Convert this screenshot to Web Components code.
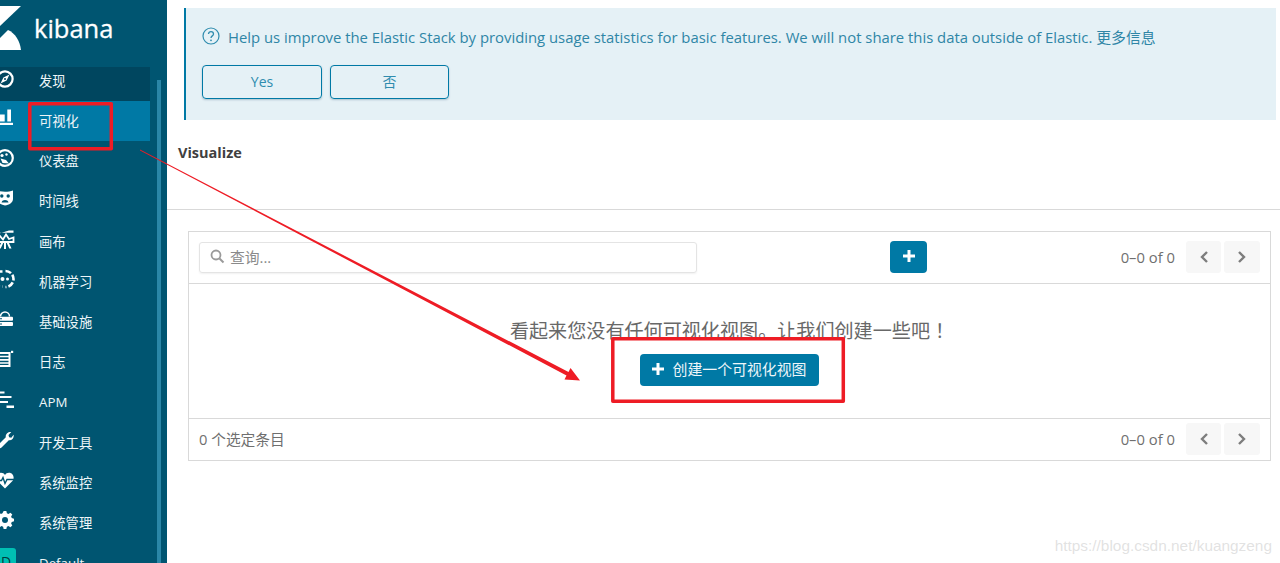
<!DOCTYPE html>
<html lang="zh">
<head>
<meta charset="utf-8">
<title>Kibana</title>
<style>
  html, body {
    margin: 0;
    height: 563px;
    overflow: hidden;
    background: #fff;
    font-family: "Open Sans", "Noto Sans CJK SC", sans-serif;
  }
</style>
</head>
<body>
<kb-app>
  <kb-sidebar slot="side">
    <kb-nav-item icon="compass" state="hover">发现</kb-nav-item>
    <kb-nav-item icon="bars" state="active">可视化</kb-nav-item>
    <kb-nav-item icon="gauge">仪表盘</kb-nav-item>
    <kb-nav-item icon="mask">时间线</kb-nav-item>
    <kb-nav-item icon="easel">画布</kb-nav-item>
    <kb-nav-item icon="ml">机器学习</kb-nav-item>
    <kb-nav-item icon="infra">基础设施</kb-nav-item>
    <kb-nav-item icon="logs">日志</kb-nav-item>
    <kb-nav-item icon="apm">APM</kb-nav-item>
    <kb-nav-item icon="wrench">开发工具</kb-nav-item>
    <kb-nav-item icon="heart">系统监控</kb-nav-item>
    <kb-nav-item icon="gear">系统管理</kb-nav-item>
    <kb-nav-item icon="space">Default</kb-nav-item>
  </kb-sidebar>
  <kb-banner>Help us improve the Elastic Stack by providing usage statistics for basic features. We will not share this data outside of Elastic. 更多信息</kb-banner>
  <kb-page-title>Visualize</kb-page-title>
  <kb-table>
    <span slot="message">看起来您没有任何可视化视图。让我们创建一些吧<span style="padding-left: 5px; margin-right: -5px">！</span></span>
    <span slot="action">创建一个可视化视图</span>
    <span slot="selected">0 个选定条目</span>
  </kb-table>
</kb-app>
<kb-annotations></kb-annotations>

<script>
const ICONS = {
  compass: `<circle cx="9" cy="9" r="7.600" fill="none" stroke="#fff" stroke-width="2.200"/><path d="M13.500 4.500 10.600 10.600 4.500 13.500 7.400 7.400z" fill="#fff"/><circle cx="9" cy="9" r="1" fill="#00465f"/>`,
  bars: `<path d="M0 13.800h17v2.200H0z" fill="#fff"/><path d="M3.500 5.500h5.200v7h-5.200zM11.300 .5h3.700v12h-3.700z" fill="#fff"/>`,
  gauge: `<circle cx="9" cy="9" r="7.800" fill="none" stroke="#fff" stroke-width="2.200"/><circle cx="6" cy="6.500" r="1.600" fill="#fff"/><circle cx="10.500" cy="5.500" r="1.200" fill="#fff"/><path d="M4.500 9.500l5.500 1.500 3 3.500-6.500-.5z" fill="#fff"/>`,
  mask: `<path d="M1 1.500C5.500 3.200 12.500 3.200 17 1.500v8.500c0 3.800-4 6-8 6.500-4-.5-8-2.700-8-6.500z" fill="#fff"/><circle cx="5.800" cy="7" r="1.700" fill="#005571"/><circle cx="12.200" cy="7" r="1.700" fill="#005571"/><path d="M5.500 13.500c1-3.200 6-3.200 7 0z" fill="#005571"/>`,
  easel: `<path d="M1 4 13 .5h4.500v2.300H3z" fill="#fff"/><path d="M0 10.500l4-4.500 3 3.500 3-5 3 4.500 4.500-1.500V12H0z" fill="none" stroke="#fff" stroke-width="1.800"/><path d="M8 12h2v7H8zM2.500 18.500l3-6.500h2.200l-3 6.500zM15.500 18.500l-3-6.500h-2.200l3 6.500z" fill="#fff"/>`,
  ml: `<path d="M9.500 1a8 8 0 0 1 0 16" fill="none" stroke="#fff" stroke-width="2.600" stroke-dasharray="6 2"/><path d="M6.500 1.500H3L.5 9 3 16.500h3.500" fill="none" stroke="#fff" stroke-width="2.600" stroke-dasharray="5 2.500"/><circle cx="6.500" cy="9" r="2" fill="#fff"/><circle cx="11.500" cy="9" r="1.500" fill="#fff"/>`,
  infra: `<path d="M4.500 6.500a4.500 4.500 0 0 1 9 0" fill="none" stroke="#fff" stroke-width="1.500"/><rect x="1" y="6.800" width="16" height="4" rx="1" fill="#fff"/><rect x="1" y="12" width="16" height="4" rx="1" fill="#fff"/><path d="M3.500 8.300h2.500v1H3.500zM3.500 13.500h2.500v1H3.500z" fill="#005571"/>`,
  logs: `<path d="M0 3h13.500v13H0z" fill="none" stroke="#fff" stroke-width="2"/><path d="M0 6.500h13.500M0 9.800h13.500M0 13h13.500" stroke="#fff" stroke-width="1.700"/><path d="M15 .8h2.200V3H15z" fill="#fff"/>`,
  apm: `<path d="M0 1.500h8.500v2H0zM0 6h15.500v2H0zM3 11h9v2H3zM10.500 15.500h7.500v2.500h-7.500z" fill="#fff"/>`,
  wrench: `<path d="M17.600 3.800c.7 3-1.700 6-4.800 5.500L5.500 16.600c-2 1.700-4.800-1-3-3l7.300-7.300C9.200 3.300 12.200.5 15.300 1.100L12.500 4l.6 2.200 2.200.6z" fill="#fff"/>`,
  heart: `<path d="M9 17.500 1.800 10.300C-1.200 7 .8 1.800 5 1.800c1.800 0 3.100.9 4 2.200.9-1.300 2.200-2.200 4-2.200 4.200 0 6.200 5.200 3.200 8.500z" fill="#fff"/><path d="M0 9.500h5.500l1.500-3 2 6 2-4h7" fill="none" stroke="#005571" stroke-width="1.400"/>`,
  gear: `<path d="M7.500 0h3l.6 2.500 1.700.7 2.200-1.300 2.100 2.100-1.300 2.200.7 1.700 2.500.6v3l-2.500.6-.7 1.700 1.300 2.200-2.100 2.100-2.200-1.300-1.700.7-.6 2.500h-3l-.6-2.500-1.700-.7-2.200 1.300L.2 16.300l1.300-2.200-.7-1.700-2.500-.6v-3l2.500-.6.7-1.700L.2 4l2.100-2.100 2.200 1.300 1.700-.7z" transform="translate(.9 0) scale(.9)" fill="#fff"/><circle cx="9" cy="9" r="3" fill="#005571"/>`
}

// one entry of the left menu, text comes through the slot
class KbNavItem extends HTMLElement {
  constructor () {
    super()
    this.shadow = this.attachShadow({ mode: 'open' })
  }

  connectedCallback () {
    const name = this.getAttribute('icon')
    const icon = name === 'space'
      ? `<span class="space">D</span>`
      : `<svg viewBox="0 0 18 18" width="18" height="18">${ICONS[name]}</svg>`
    this.shadow.innerHTML = /*html*/`
      <style>
        :host {
          display: flex;
          align-items: center;
          box-sizing: border-box;
          height: 40.2px;
          padding-bottom: 1px;
          color: #eef5f8;
          font-size: 13.3px;
        }
        :host([state="hover"]) { background: #00465f; height: 34px; padding-bottom: 8px; }
        :host([state="active"]) { background: #0079a5; }
        .icon {
          flex: none;
          width: 18px;
          height: 18px;
          margin-left: -4px;
          margin-right: 25px;
          margin-bottom: 5px;
        }
        :host([state="hover"]) .icon { margin-bottom: 3px; }
        .space {
          display: block;
          box-sizing: border-box;
          width: 20px;
          height: 20px;
          margin-top: -3px;
          padding-left: 5px;
          border-radius: 3px;
          background: #00bfb3;
          color: #00393a;
          font-size: 14px;
          line-height: 28px;
          overflow: hidden;
        }
        svg { display: block; overflow: visible; }
      </style>
      <span class="icon">${icon}</span>
      <slot></slot>
    `
  }
}

class KbSidebar extends HTMLElement {
  constructor () {
    super()
    this.shadow = this.attachShadow({ mode: 'open' })
  }

  connectedCallback () {
    this.shadow.innerHTML = /*html*/`
      <style>
        :host {
          display: block;
          width: 167px;
          height: 563px;
          background: #005571;
          overflow: hidden;
        }
        .logo {
          display: flex;
          align-items: center;
          height: 67px;
          box-sizing: border-box;
          padding-bottom: 12px;
          color: #fff;
          font: 400 25.500px/1 "Open Sans", sans-serif;
        }
        .logo svg { flex: none; margin-right: 13px; }
        .logo span { padding-top: 2px; -webkit-text-stroke: .3px #fff; }
        .body { display: flex; align-items: flex-start; }
        nav { width: 150px; flex: none; }
        .thumb {
          width: 4px;
          height: 500px;
          margin: 13px 0 0 7px;
          background: #2a86a7;
        }
      </style>
      <div class="logo">
        <svg width="21" height="46" viewBox="0 0 21 46">
          <path d="M0 1h21L0 21z" fill="#fff"/>
          <path d="M0 33l8-8c7 3 12 11 13 20H0z" fill="#fff"/>
        </svg>
        <span>kibana</span>
      </div>
      <div class="body">
        <nav><slot></slot></nav>
        <div class="thumb"></div>
      </div>
    `
  }
}

class KbButton extends HTMLElement {
  constructor () {
    super()
    this.shadow = this.attachShadow({ mode: 'open' })
  }

  connectedCallback () {
    this.shadow.innerHTML = /*html*/`
      <style>
        :host {
          display: inline-flex;
          align-items: center;
          justify-content: center;
          box-sizing: border-box;
          height: 34px;
          width: 120px;
          padding-bottom: 2px;
          border: 1px solid #0079a5;
          border-radius: 4px;
          color: #2f8cae;
          font-size: 14px;
          box-shadow: 0 1px 2px rgba(0, 60, 90, .25);
        }
      </style>
      <slot></slot>
    `
  }
}

class KbBanner extends HTMLElement {
  constructor () {
    super()
    this.shadow = this.attachShadow({ mode: 'open' })
  }

  connectedCallback () {
    this.shadow.innerHTML = /*html*/`
      <style>
        :host {
          display: block;
          box-sizing: border-box;
          height: 112px;
          margin: 8px 4px 0 17px;
          padding: 17px 0 0 16px;
          background: #e5f1f6;
          border-left: 2px solid #0079a5;
          color: #2f86a6;
          font-size: 14.850px;
        }
        .line { display: flex; align-items: center; height: 22px; white-space: nowrap; }
        svg { margin-right: 8px; flex: none; }
        .actions { display: flex; gap: 8px; margin-top: 18px; }
        kb-button + kb-button { width: 119px; }
      </style>
      <div class="line">
        <svg width="18" height="18" viewBox="0 0 18 18">
          <circle cx="9" cy="9" r="8" fill="none" stroke="#2f8cae" stroke-width="1.200"/>
          <path d="M6.500 7c0-3.300 5-3.300 5 0 0 2-2.500 1.800-2.500 4" fill="none" stroke="#2f8cae" stroke-width="1.300"/>
          <circle cx="9" cy="13.300" r=".9" fill="#2f8cae"/>
        </svg>
        <span><slot></slot></span>
      </div>
      <div class="actions">
        <kb-button>Yes</kb-button>
        <kb-button>否</kb-button>
      </div>
    `
  }
}

class KbPageTitle extends HTMLElement {
  constructor () {
    super()
    this.shadow = this.attachShadow({ mode: 'open' })
  }

  connectedCallback () {
    this.shadow.innerHTML = /*html*/`
      <style>
        :host {
          display: block;
          box-sizing: border-box;
          height: 90px;
          padding: 23px 0 0 11px;
          border-bottom: 1px solid #d9d9d9;
          color: #3f3f3f;
          font-size: 14.500px;
          font-weight: 700;
          line-height: 20px;
        }
      </style>
      <slot></slot>
    `
  }
}

class KbPager extends HTMLElement {
  constructor () {
    super()
    this.shadow = this.attachShadow({ mode: 'open' })
  }

  connectedCallback () {
    this.shadow.innerHTML = /*html*/`
      <style>
        :host {
          display: flex;
          align-items: center;
          color: #6f6f6f;
          font-size: 14.800px;
        }
        span { margin-right: 11px; padding-bottom: 1px; }
        .btn {
          display: flex;
          align-items: center;
          justify-content: center;
          width: 35px;
          height: 32px;
          background: #f7f7f7;
          border-radius: 3px;
        }
        .btn + .btn { margin-left: 3px; width: 36px; }
        path { fill: none; stroke: #7d7d7d; stroke-width: 2.400; }
      </style>
      <span>0–0 of 0</span>
      <div class="btn"><svg width="12" height="14" viewBox="0 0 12 14"><path d="M9 2 4 7l5 5"/></svg></div>
      <div class="btn"><svg width="12" height="14" viewBox="0 0 12 14"><path d="M3 2l5 5-5 5"/></svg></div>
    `
  }
}

class KbTable extends HTMLElement {
  constructor () {
    super()
    this.shadow = this.attachShadow({ mode: 'open' })
  }

  connectedCallback () {
    const plus = `<svg width="12" height="12" viewBox="0 0 12 12"><path d="M4.500 0h3v4.500H12v3H7.500V12h-3V7.500H0v-3h4.500z" fill="#fff"/></svg>`
    this.shadow.innerHTML = /*html*/`
      <style>
        :host {
          display: block;
          box-sizing: border-box;
          height: 230px;
          margin: 21px 9px 0 21px;
          border: 1px solid #d9d9d9;
        }
        .bar {
          display: flex;
          align-items: center;
          box-sizing: border-box;
          padding: 0 10px 0 10px;
        }
        .top { height: 52px; padding-bottom: 1px; border-bottom: 1px solid #d9d9d9; }
        .search {
          display: flex;
          align-items: center;
          box-sizing: border-box;
          width: 498px;
          height: 31px;
          padding: 0 0 2px 10px;
          border: 1px solid #e4e4e4;
          border-radius: 3px;
          box-shadow: 0 1px 2px rgba(0, 0, 0, .06);
          color: #8a8a8a;
          font-size: 14.800px;
        }
        .search svg { margin-right: 5px; }
        .add {
          display: flex;
          align-items: center;
          justify-content: center;
          box-sizing: border-box;
          width: 37px;
          height: 32px;
          margin-left: 193px;
          padding-bottom: 2px;
          background: #0079a5;
          border-radius: 4px;
        }
        kb-pager { margin-left: auto; }
        .empty {
          display: flex;
          flex-direction: column;
          align-items: center;
          box-sizing: border-box;
          height: 135px;
          padding-top: 33px;
          border-bottom: 1px solid #d9d9d9;
          color: #686868;
          font-size: 19.100px;
          line-height: 28px;
          white-space: nowrap;
        }
        .create {
          display: flex;
          align-items: center;
          justify-content: center;
          gap: 8px;
          box-sizing: border-box;
          width: 179px;
          height: 32px;
          margin-top: 9px;
          padding-bottom: 3px;
          background: #0079a5;
          border-radius: 4px;
          color: #eef6f9;
          font-size: 14.900px;
        }
        .bottom { height: 42px; padding-bottom: 2px; color: #6f6f6f; font-size: 14.700px; }
        .selected { padding-bottom: 2px; }
      </style>
      <div class="bar top">
        <div class="search">
          <svg width="15" height="15" viewBox="0 0 15 15"><circle cx="6" cy="6" r="4.500" fill="none" stroke="#9a9a9a" stroke-width="1.800"/><path d="m9.500 9.500 4 4" stroke="#9a9a9a" stroke-width="2"/></svg>
          查询...
        </div>
        <div class="add">${plus}</div>
        <kb-pager></kb-pager>
      </div>
      <div class="empty">
        <slot name="message"></slot>
        <div class="create">${plus}<slot name="action"></slot></div>
      </div>
      <div class="bar bottom">
        <div class="selected"><slot name="selected"></slot></div>
        <kb-pager></kb-pager>
      </div>
    `
  }
}

// screenshot markup on top of the page: red boxes, arrow, blog watermark
class KbAnnotations extends HTMLElement {
  constructor () {
    super()
    this.shadow = this.attachShadow({ mode: 'open' })
  }

  connectedCallback () {
    this.shadow.innerHTML = /*html*/`
      <style>
        :host {
          position: absolute;
          left: 0;
          top: 0;
          width: 1280px;
          height: 563px;
          pointer-events: none;
        }
        svg { position: absolute; left: 0; top: 0; }
        .mark {
          position: absolute;
          right: 8px;
          top: 535px;
          color: rgba(190, 190, 190, .45);
          font: 15.400px/22px "Liberation Sans", Arial, sans-serif;
        }
      </style>
      <svg width="1280" height="563" viewBox="0 0 1280 563">
        <g fill="none" stroke="#ee1c25" stroke-width="3.500" stroke-linejoin="round">
          <rect x="29.800" y="103.800" width="81.500" height="45"/>
          <rect x="612.800" y="338.800" width="230.500" height="62.400"/>
        </g>
        <path d="M140 149.600 140 150.400 566.500 375.500 564.500 379.500 580 380.500 570.500 368 568.500 372z" fill="#ee1c25"/>
      </svg>
      <div class="mark">https://blog.csdn.net/kuangzeng</div>
    `
  }
}

class KbApp extends HTMLElement {
  constructor () {
    super()
    this.shadow = this.attachShadow({ mode: 'open' })
  }

  connectedCallback () {
    this.shadow.innerHTML = /*html*/`
      <style>
        :host { display: flex; height: 563px; }
        main { flex: 1; min-width: 0; }
      </style>
      <slot name="side"></slot>
      <main><slot></slot></main>
    `
  }
}

customElements.define('kb-nav-item', KbNavItem)
customElements.define('kb-sidebar', KbSidebar)
customElements.define('kb-button', KbButton)
customElements.define('kb-banner', KbBanner)
customElements.define('kb-page-title', KbPageTitle)
customElements.define('kb-pager', KbPager)
customElements.define('kb-table', KbTable)
customElements.define('kb-annotations', KbAnnotations)
customElements.define('kb-app', KbApp)
</script>
</body>
</html>
